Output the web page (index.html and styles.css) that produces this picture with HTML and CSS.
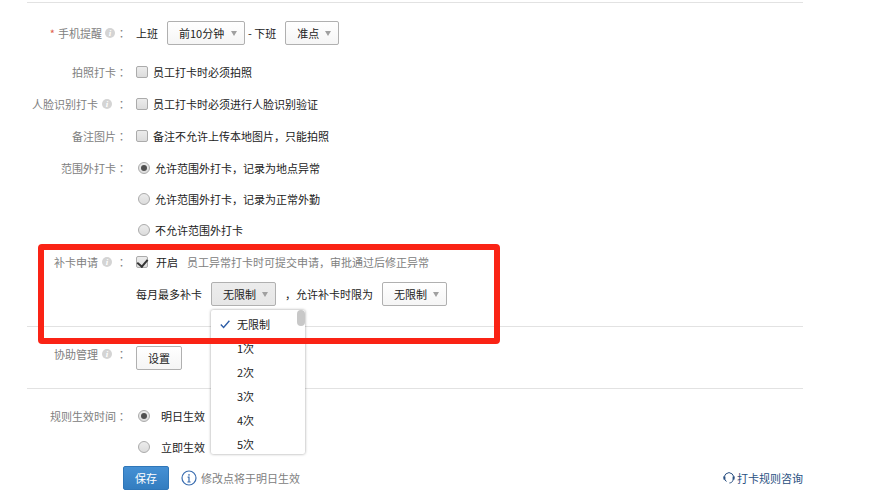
FILE: index.html
```html
<!DOCTYPE html>
<html lang="zh-CN">
  <head>
    <meta charset="UTF-8" />
    <meta name="viewport" content="width=device-width, initial-scale=1.0" />
    <title>打卡规则</title>
    <link rel="stylesheet" href="styles.css">
  </head>
  <body>
    <form class="rule-form">
      <section class="section">
        <div class="row row-remind">
          <div class="label label-required"><span class="star">*</span>手机提醒<span class="info">i</span><span class="colon">：</span></div>
          <div class="field">
            <label for="remind-on">上班</label>
            <div class="select">
              <select id="remind-on"><option>前10分钟</option></select>
            </div>
            <label class="label-off" for="remind-off">- 下班</label>
            <div class="select">
              <select id="remind-off"><option>准点</option></select>
            </div>
          </div>
        </div>
        <div class="row">
          <div class="label">拍照打卡<span class="colon">：</span></div>
          <label class="option"><input type="checkbox">员工打卡时必须拍照</label>
        </div>
        <div class="row">
          <div class="label">人脸识别打卡<span class="info">i</span><span class="colon">：</span></div>
          <label class="option"><input type="checkbox">员工打卡时必须进行人脸识别验证</label>
        </div>
        <div class="row">
          <div class="label">备注图片<span class="colon">：</span></div>
          <label class="option"><input type="checkbox">备注不允许上传本地图片，只能拍照</label>
        </div>
        <div class="row row-top">
          <div class="label">范围外打卡<span class="colon">：</span></div>
          <div class="radio-list">
            <label class="option"><input type="radio" name="range" checked>允许范围外打卡，记录为地点异常</label>
            <label class="option"><input type="radio" name="range">允许范围外打卡，记录为正常外勤</label>
            <label class="option"><input type="radio" name="range">不允许范围外打卡</label>
          </div>
        </div>
        <div class="reissue">
          <div class="row">
            <div class="label">补卡申请<span class="info">i</span><span class="colon">：</span></div>
            <div class="field">
              <label class="option option-wide"><input type="checkbox" checked>开启</label>
              <span class="hint">员工异常打卡时可提交申请，审批通过后修正异常</span>
            </div>
          </div>
          <div class="row">
            <div class="label"></div>
            <div class="field">
              <label for="max-count">每月最多补卡</label>
              <div class="select select-open">
                <select id="max-count"><option>无限制</option></select>
                <ul class="menu">
                  <li class="selected">
                    <svg class="tick" viewBox="0 0 10 10"><path d="M0.8 5.5 L3.6 8.4 L9.4 1.8" /></svg>无限制
                  </li>
                  <li>1次</li>
                  <li>2次</li>
                  <li>3次</li>
                  <li>4次</li>
                  <li>5次</li>
                </ul>
              </div>
              <label for="time-limit">，允许补卡时限为</label>
              <div class="select">
                <select id="time-limit"><option>无限制</option></select>
              </div>
            </div>
          </div>
          <div class="highlight"></div>
        </div>
      </section>

      <section class="section section-manage">
        <div class="row row-top">
          <div class="label">协助管理<span class="info">i</span><span class="colon">：</span></div>
          <button class="btn" type="button">设置</button>
        </div>
      </section>

      <section class="section section-effect">
        <div class="row row-top">
          <div class="label">规则生效时间<span class="colon">：</span></div>
          <div class="radio-list radio-list-wide">
            <label class="option"><input type="radio" name="effect" checked>明日生效</label>
            <label class="option"><input type="radio" name="effect">立即生效</label>
          </div>
        </div>
        <div class="footer">
          <button class="btn btn-primary" type="submit">保存</button>
          <svg class="notice-icon" viewBox="0 0 16 16">
            <circle cx="8" cy="8" r="7" />
            <path d="M8 4v1.8M6.6 7.2H8V12M6.4 12h3.2" />
          </svg>
          <span class="notice">修改点将于明日生效</span>
          <a class="help" href="#">
            <svg viewBox="0 0 12 12">
              <path d="M2 8.2A4.8 4.8 0 1 1 10 8.2M10 8.2C9.4 10 8.4 10.8 6.4 11M2 8.2L3.6 9.4" />
              <path class="ear" d="M1.4 4.6v3M10.6 4.6v3" />
            </svg>打卡规则咨询</a>
        </div>
      </section>
    </form>
  </body>
</html>
```
FILE: styles.css
```css
* {
  box-sizing: border-box;
}
body {
  margin: 0;
  background: #fff;
  color: #222;
  font-family: "Noto Sans CJK SC", sans-serif;
  font-size: 11px;
  line-height: 16px;
}
input,
select,
button {
  margin: 0;
  font: inherit;
  color: inherit;
}
.rule-form {
  margin: 2px 71px 0 27px;
}
.section {
  border-top: 1px solid #e2e2e2;
  padding: 14px 0 16px;
}
.section-manage {
  padding: 15px 0;
}
.section-effect {
  padding: 11px 0 0;
}

/* rows */
.row {
  display: flex;
  align-items: center;
  gap: 9px;
  min-height: 32px;
}
.row-remind {
  margin-bottom: 7px;
}
.row-top {
  align-items: flex-start;
}
.label {
  display: flex;
  flex: none;
  align-items: center;
  justify-content: flex-end;
  width: 100px;
  color: #808080;
  white-space: nowrap;
}
.row-top .label {
  height: 32px;
}
.section-manage .row {
  min-height: 31px;
}
.section-manage .label {
  height: 24px;
}
.section-manage .btn {
  margin-top: 4px;
}
.colon {
  font-family: "Noto Sans CJK TC", sans-serif;
}
.star {
  margin-right: 3px;
  color: #e0604c;
}
.info {
  width: 10px;
  height: 10px;
  margin: 0 4px;
  border-radius: 50%;
  background: #d4d4d4;
  color: #fff;
  font: italic bold 9px/10px "Liberation Serif", serif;
  text-align: center;
}
.label-required .info {
  margin: 0 1px 0 3px;
}
.field {
  display: flex;
  align-items: center;
  gap: 9px;
  white-space: nowrap;
}
.label-off {
  margin-left: -6px;
}
.hint,
.notice {
  color: #808080;
}

/* checkbox and radio */
.option {
  display: flex;
  align-items: center;
  gap: 5px;
}
.option-wide {
  gap: 8px;
}
.option input {
  display: grid;
  place-items: center;
  width: 12px;
  height: 12px;
  appearance: none;
  border: 1px solid #ababab;
  border-radius: 2px;
  background: linear-gradient(#ececec, #dcdcdc);
}
.option input[type="checkbox"]:checked::after {
  content: "";
  width: 5px;
  height: 8px;
  margin-bottom: 2px;
  border: solid #333;
  border-width: 0 2px 2px 0;
  transform: rotate(40deg);
}
.option input[type="radio"] {
  border-radius: 50%;
}
.option input[type="radio"]:checked::after {
  content: "";
  width: 6px;
  height: 6px;
  border-radius: 50%;
  background: #505050;
}
.radio-list {
  padding-left: 2px;
}
.radio-list .option {
  height: 31px;
}
.radio-list-wide .option {
  gap: 11px;
}

/* select */
.select {
  position: relative;
}
.select select {
  display: block;
  height: 24px;
  padding: 0 19px 0 11px;
  appearance: none;
  border: 1px solid #b0b0b0;
  border-radius: 2px;
  background: linear-gradient(#fff, #f5f5f5);
}
.select::after {
  content: "";
  position: absolute;
  top: 10px;
  right: 8px;
  border: solid transparent;
  border-width: 5px 3px 0;
  border-top-color: #a0a0a0;
  pointer-events: none;
}
.select-open select {
  background: linear-gradient(#ececec, #e6e6e6);
}
.menu {
  position: absolute;
  top: 28px;
  left: 0;
  z-index: 1;
  width: 94px;
  height: 144px;
  margin: 0;
  padding: 2px 0 0;
  overflow: hidden;
  list-style: none;
  background: #fff;
  border-radius: 2px;
  box-shadow: 0 0 3px rgba(0, 0, 0, 0.4);
}
.menu::after {
  content: "";
  position: absolute;
  top: 0;
  right: 0;
  width: 8px;
  height: 16px;
  border-radius: 4px;
  background: #c8c8c8;
}
.menu li {
  height: 24px;
  padding-left: 26px;
  line-height: 24px;
}
.menu .selected {
  display: flex;
  align-items: center;
  gap: 7px;
  padding-left: 9px;
}
.tick {
  width: 10px;
  height: 10px;
  fill: none;
  stroke: #2f5fa8;
  stroke-width: 1.4;
}

/* marked area */
.reissue {
  position: relative;
  margin-top: 1px;
}
.highlight {
  position: absolute;
  top: -2px;
  left: 11px;
  z-index: 2;
  width: 462px;
  height: 100px;
  border: 6px solid #fa2315;
  border-radius: 4px;
  pointer-events: none;
}

/* buttons and footer */
.btn {
  width: 46px;
  height: 24px;
  padding: 0;
  border: 1px solid #b0b0b0;
  border-radius: 2px;
  background: linear-gradient(#fff, #f5f5f5);
}
.btn-primary {
  border-color: #2f76b8;
  background: linear-gradient(#4590d4, #337dc0);
  color: #fff;
}
.footer {
  display: flex;
  align-items: center;
  height: 32px;
  padding-left: 96px;
  white-space: nowrap;
}
.notice-icon {
  width: 16px;
  height: 16px;
  margin: 0 4px 0 12px;
  fill: none;
  stroke: #3a6db0;
  stroke-width: 1.2;
}
.help {
  display: flex;
  align-items: center;
  gap: 2px;
  margin-left: auto;
  color: #2a5082;
  text-decoration: none;
}
.help svg {
  width: 12px;
  height: 12px;
  fill: none;
  stroke: currentColor;
  stroke-width: 1;
}
.help .ear {
  stroke-width: 2;
}
```
